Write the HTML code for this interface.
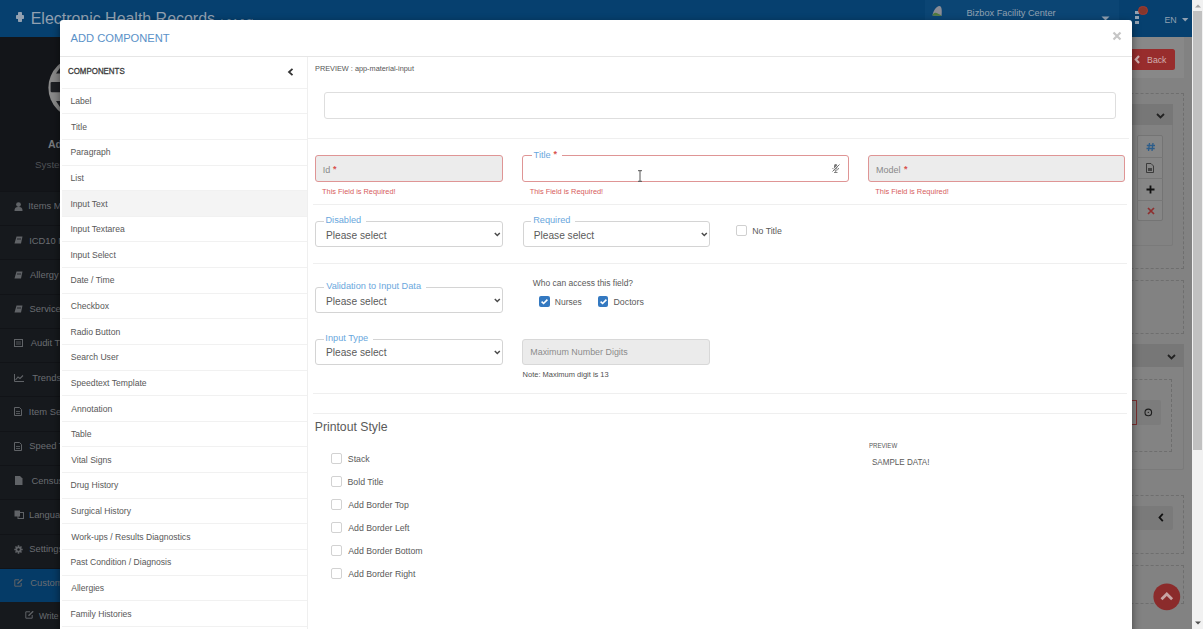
<!DOCTYPE html><html><head><meta charset="utf-8"><style>
html,body{margin:0;padding:0;width:1203px;height:629px;overflow:hidden;background:#838383}
.t{position:absolute;white-space:nowrap;font-family:"Liberation Sans",sans-serif}
.r{position:absolute}
</style></head><body>
<div class="r" style="left:0px;top:0px;width:1192px;height:37px;background:#06406f"></div>
<div class="r" style="left:18.2px;top:12px;width:3.400000000000002px;height:10.399999999999999px;background:#92a1b1;border-radius:0.8px"></div>
<div class="r" style="left:15.5px;top:15.4px;width:8.8px;height:3.4999999999999982px;background:#92a1b1;border-radius:0.8px"></div>
<div class="t" style="left:30.72px;top:10.50px;font-size:15.95px;line-height:15.95px;color:#92a1b1;font-weight:400;">Electronic Health Records</div>
<div class="t" style="left:220.02px;top:18.23px;font-size:8.00px;line-height:8.00px;color:#92a1b1;font-weight:400;">(v0.1.0.8)</div>
<div class="r" style="left:925px;top:0px;width:194px;height:37px;background:#0b4574"></div>
<svg class="r" style="left:931px;top:4px;" width="12" height="13" viewBox="0 0 12 13"><path d="M1.5 11.5 C2 7 5 2.5 8.5 2 C11 2.5 11 7 10.5 12 Z" fill="#8a8c95"/><path d="M1.5 11.5 C2 9.5 3.5 8.5 5.5 9 C7 10 9 10 10.5 12 Z" fill="#4e7a3c"/></svg>
<div class="t" style="left:966.46px;top:9.19px;font-size:9.22px;line-height:9.22px;color:#92a1b1;font-weight:400;">Bizbox Facility Center</div>
<svg class="r" style="left:1101px;top:16px;" width="9" height="5" viewBox="0 0 9 5"><path d="M0.5 0.5 H8.5 L4.5 4.5 Z" fill="#92a1b1"/></svg>
<div class="r" style="left:1135px;top:11.3px;width:3.599999999999909px;height:3.0px;background:#92a1b1"></div>
<div class="r" style="left:1135px;top:16.3px;width:3.599999999999909px;height:3.0px;background:#92a1b1"></div>
<div class="r" style="left:1135px;top:21.3px;width:3.599999999999909px;height:3.0px;background:#92a1b1"></div>
<div class="r" style="left:1138.3px;top:5.6px;width:9.4px;height:9.4px;border-radius:50%;background:#86362c;box-sizing:border-box;border:1px solid #a03a30"></div>
<div class="t" style="left:1164.39px;top:15.50px;font-size:8.86px;line-height:8.86px;color:#92a1b1;font-weight:400;">EN</div>
<svg class="r" style="left:1182.3px;top:18.3px;" width="7" height="4" viewBox="0 0 7 4"><path d="M0 0 H6.4 L3.2 3.5 Z" fill="#92a1b1"/></svg>
<div class="r" style="left:0px;top:37px;width:60px;height:592px;background:#131519"></div>
<div class="r" style="left:0px;top:190.6px;width:60px;height:438.4px;background:#16191d"></div>
<svg class="r" style="left:48px;top:56px;" width="12" height="64" viewBox="0 0 12 64"><circle cx="31.1" cy="31.8" r="30.7" fill="#8a8a8a"/><rect x="2.6" y="25.9" width="10" height="10.4" rx="1.2" fill="#1d1f23"/><path d="M8 17.5 L12 12 L12 17.5 Z" fill="#1d1f23"/><path d="M8 45 L12 51 L12 45 Z" fill="#1d1f23"/></svg>
<div class="t" style="left:47.94px;top:139.11px;font-size:10.50px;line-height:10.50px;color:#777a7e;font-weight:700;">Admin</div>
<div class="t" style="left:35.06px;top:159.70px;font-size:9.80px;line-height:9.80px;color:#4f5256;font-weight:400;">System Admin</div>
<div class="r" style="left:0px;top:190.6px;width:60px;height:1.0px;background:#111317"></div>
<div class="t" style="left:28.25px;top:201.04px;font-size:9.40px;line-height:9.40px;color:#6a6d72;font-weight:400;">Items Maintenance</div>
<svg class="r" style="left:13.5px;top:201.5px;" width="9" height="9" viewBox="0 0 9 9"><circle cx="4.5" cy="2.6" r="2.4" fill="#606367"/><path d="M0.5 9 C0.5 5.5 2 5 4.5 5 C7 5 8.5 5.5 8.5 9 Z" fill="#606367"/></svg>
<div class="r" style="left:0px;top:224.89999999999998px;width:60px;height:1.0px;background:#111317"></div>
<div class="t" style="left:29.15px;top:236.04px;font-size:9.40px;line-height:9.40px;color:#6a6d72;font-weight:400;">ICD10 Maintenance</div>
<svg class="r" style="left:13.5px;top:236.3px;" width="9" height="8" viewBox="0 0 9 8"><path d="M2.5 0.5 H8.5 L7 7.5 H0.5 Z" fill="#606367"/><path d="M3 3 H7" stroke="#131519" stroke-width="0.8"/></svg>
<div class="r" style="left:0px;top:259.2px;width:60px;height:1.0px;background:#111317"></div>
<div class="t" style="left:30.00px;top:270.04px;font-size:9.40px;line-height:9.40px;color:#6a6d72;font-weight:400;">Allergy Maintenance</div>
<svg class="r" style="left:13.5px;top:270.6px;" width="9" height="8" viewBox="0 0 9 8"><path d="M2.5 0.5 H8.5 L7 7.5 H0.5 Z" fill="#606367"/><path d="M3 3 H7" stroke="#131519" stroke-width="0.8"/></svg>
<div class="r" style="left:0px;top:293.5px;width:60px;height:1.0px;background:#111317"></div>
<div class="t" style="left:29.58px;top:304.04px;font-size:9.40px;line-height:9.40px;color:#6a6d72;font-weight:400;">Services Maintenance</div>
<svg class="r" style="left:13.5px;top:304.9px;" width="9" height="8" viewBox="0 0 9 8"><path d="M2.5 0.5 H8.5 L7 7.5 H0.5 Z" fill="#606367"/><path d="M3 3 H7" stroke="#131519" stroke-width="0.8"/></svg>
<div class="r" style="left:0px;top:327.79999999999995px;width:60px;height:1.0px;background:#111317"></div>
<div class="t" style="left:30.70px;top:338.04px;font-size:9.40px;line-height:9.40px;color:#6a6d72;font-weight:400;">Audit Trail</div>
<svg class="r" style="left:13.5px;top:339.2px;" width="9" height="8" viewBox="0 0 9 8"><rect x="0.5" y="0.5" width="8" height="7" fill="none" stroke="#606367" stroke-width="1"/><path d="M2 3 H7 M2 5 H7" stroke="#606367" stroke-width="0.8"/></svg>
<div class="r" style="left:0px;top:362.1px;width:60px;height:1.0px;background:#111317"></div>
<div class="t" style="left:32.31px;top:373.04px;font-size:9.40px;line-height:9.40px;color:#6a6d72;font-weight:400;">Trends</div>
<svg class="r" style="left:13.5px;top:373.5px;" width="10" height="8" viewBox="0 0 10 8"><path d="M0.5 0 V7.5 H10" fill="none" stroke="#606367" stroke-width="1"/><path d="M1.5 6 L4 3 L6 4.5 L9 1.5" fill="none" stroke="#606367" stroke-width="1.1"/></svg>
<div class="r" style="left:0px;top:396.4px;width:60px;height:1.0px;background:#111317"></div>
<div class="t" style="left:28.85px;top:407.04px;font-size:9.40px;line-height:9.40px;color:#6a6d72;font-weight:400;">Item Settings</div>
<svg class="r" style="left:13.5px;top:407.29999999999995px;" width="8" height="9" viewBox="0 0 8 9"><path d="M0.5 0.5 H5.5 L7.5 2.5 V8.5 H0.5 Z" fill="none" stroke="#606367" stroke-width="1"/><path d="M2 4.5 H6 M2 6.5 H6" stroke="#606367" stroke-width="0.8"/></svg>
<div class="r" style="left:0px;top:430.69999999999993px;width:60px;height:1.0px;background:#111317"></div>
<div class="t" style="left:29.28px;top:441.04px;font-size:9.40px;line-height:9.40px;color:#6a6d72;font-weight:400;">Speed Text</div>
<svg class="r" style="left:13.5px;top:441.59999999999997px;" width="8" height="9" viewBox="0 0 8 9"><path d="M0.5 0.5 H5.5 L7.5 2.5 V8.5 H0.5 Z" fill="none" stroke="#606367" stroke-width="1"/><path d="M2 4.5 H6 M2 6.5 H6" stroke="#606367" stroke-width="0.8"/></svg>
<div class="r" style="left:0px;top:465.0px;width:60px;height:1.0px;background:#111317"></div>
<div class="t" style="left:31.53px;top:476.04px;font-size:9.40px;line-height:9.40px;color:#6a6d72;font-weight:400;">Census</div>
<svg class="r" style="left:14.5px;top:475.9px;" width="8" height="9" viewBox="0 0 8 9"><path d="M0 0 H5 L7.5 2.5 V9 H0 Z" fill="#606367"/></svg>
<div class="r" style="left:0px;top:499.29999999999995px;width:60px;height:1.0px;background:#111317"></div>
<div class="t" style="left:28.95px;top:510.04px;font-size:9.40px;line-height:9.40px;color:#6a6d72;font-weight:400;">Language</div>
<svg class="r" style="left:13.5px;top:510.20000000000005px;" width="10" height="9" viewBox="0 0 10 9"><rect x="0.5" y="0.5" width="5.5" height="6" fill="#606367"/><rect x="4" y="2.5" width="5.5" height="6" fill="none" stroke="#606367" stroke-width="1"/></svg>
<div class="r" style="left:0px;top:533.6px;width:60px;height:1.0px;background:#111317"></div>
<div class="t" style="left:29.28px;top:544.04px;font-size:9.40px;line-height:9.40px;color:#6a6d72;font-weight:400;">Settings</div>
<svg class="r" style="left:14.0px;top:544.5px;" width="9" height="9" viewBox="0 0 9 9"><path d="M4.5 0.3 V8.7 M0.3 4.5 H8.7 M1.5 1.5 L7.5 7.5 M7.5 1.5 L1.5 7.5" stroke="#606367" stroke-width="1.6"/><circle cx="4.5" cy="4.5" r="3" fill="#606367"/><circle cx="4.5" cy="4.5" r="1.2" fill="#16191d"/></svg>
<div class="r" style="left:0px;top:567.9px;width:60px;height:1.0px;background:#111317"></div>
<div class="r" style="left:0px;top:568.9px;width:60px;height:33.299999999999955px;background:#053b67"></div>
<div class="t" style="left:30.23px;top:578.04px;font-size:9.40px;line-height:9.40px;color:#6a6d72;font-weight:400;">Customize</div>
<svg class="r" style="left:13.5px;top:579.3px;" width="9" height="8" viewBox="0 0 9 8"><path d="M5 0.8 H0.8 V7.2 H7.2 V4" fill="none" stroke="#606367" stroke-width="1"/><path d="M3.5 4.8 L8.2 0.3" stroke="#606367" stroke-width="1.4"/></svg>
<svg class="r" style="left:25px;top:611px;" width="9" height="8" viewBox="0 0 9 8"><path d="M5 0.8 H0.8 V7.2 H7.2 V4" fill="none" stroke="#606367" stroke-width="1"/><path d="M3.5 4.8 L8.2 0.3" stroke="#606367" stroke-width="1.4"/></svg>
<div class="t" style="left:39.00px;top:611.89px;font-size:8.40px;line-height:8.40px;color:#6a6d72;font-weight:400;">Write</div>
<div class="r" style="left:60px;top:37px;width:1132px;height:592px;background:#828282"></div>
<div class="r" style="left:60px;top:37px;width:1123.5px;height:41px;background:#888888"></div>
<div class="r" style="left:1110px;top:49px;width:65px;height:21.4px;border-radius:2.5px;background:#982d2d"></div>
<svg class="r" style="left:1133.5px;top:55px;" width="7" height="9" viewBox="0 0 7 9"><path d="M5 1 L1.8 4.5 L5 8" fill="none" stroke="#d2b0b0" stroke-width="2.2"/></svg>
<div class="t" style="left:1147.10px;top:55.64px;font-size:8.70px;line-height:8.70px;color:#d2b0b0;font-weight:400;">Back</div>
<div class="r" style="left:1100px;top:93.4px;width:84px;height:176.1px;border:1px dashed #6e6e6e;box-sizing:border-box"></div>
<div class="r" style="left:1100px;top:104px;width:73px;height:141.5px;background:#828282;border:1px solid #7a7a7a;border-radius:2px;box-sizing:border-box"></div>
<div class="r" style="left:1100px;top:104px;width:73px;height:20.5px;background:#777777"></div>
<svg class="r" style="left:1156px;top:113px;" width="9" height="6" viewBox="0 0 9 6"><path d="M1 1 L4.5 4.5 L8 1" fill="none" stroke="#222" stroke-width="1.8"/></svg>
<div class="r" style="left:1137.2px;top:135.3px;width:25.399999999999864px;height:85.89999999999998px;background:#868686;border:1px solid #747474;border-radius:2px;box-sizing:border-box"></div>
<div class="r" style="left:1137.2px;top:156.8px;width:25.399999999999864px;height:0.5px;background:#777"></div>
<div class="r" style="left:1137.2px;top:178.3px;width:25.399999999999864px;height:0.5px;background:#777"></div>
<div class="r" style="left:1137.2px;top:199.8px;width:25.399999999999864px;height:0.5px;background:#777"></div>
<svg class="r" style="left:1146px;top:141.5px;" width="10" height="10" viewBox="0 0 10 10"><path d="M3.5 1 L2.5 9 M7 1 L6 9 M0.8 3.5 H9 M0.5 6.5 H8.7" stroke="#2d5d8a" stroke-width="1.3"/></svg>
<svg class="r" style="left:1146px;top:163px;" width="8" height="10" viewBox="0 0 8 10"><path d="M0.5 0.5 H5 L7.5 3 V9.5 H0.5 Z" fill="none" stroke="#333" stroke-width="0.9"/><rect x="2" y="5" width="4" height="3" fill="#444"/></svg>
<svg class="r" style="left:1146px;top:185px;" width="9" height="9" viewBox="0 0 9 9"><path d="M4.5 0.5 V8.5 M0.5 4.5 H8.5" stroke="#111" stroke-width="1.8"/></svg>
<svg class="r" style="left:1146.5px;top:207px;" width="8" height="8" viewBox="0 0 8 8"><path d="M1 1 L7 7 M7 1 L1 7" stroke="#8e2e2e" stroke-width="1.7"/></svg>
<div class="r" style="left:1100px;top:280px;width:84px;height:54px;border:1px dashed #6e6e6e;box-sizing:border-box"></div>
<div class="r" style="left:1100px;top:344px;width:83.5px;height:126px;background:#838383;border:1px solid #7a7a7a;border-radius:2px;box-sizing:border-box"></div>
<div class="r" style="left:1100px;top:344px;width:83.5px;height:23px;background:#777777"></div>
<svg class="r" style="left:1167px;top:353.5px;" width="9" height="6" viewBox="0 0 9 6"><path d="M1 1 L4.5 4.5 L8 1" fill="none" stroke="#222" stroke-width="1.8"/></svg>
<div class="r" style="left:1100px;top:378.6px;width:72px;height:73.39999999999998px;border:1px dashed #6e6e6e;box-sizing:border-box"></div>
<div class="r" style="left:1100px;top:400px;width:36.59999999999991px;height:25.30000000000001px;border:1px solid #7c2f2f;box-sizing:border-box"></div>
<div class="r" style="left:1137px;top:400px;width:23.59999999999991px;height:25.30000000000001px;background:#7c7c7c;border-radius:2px"></div>
<svg class="r" style="left:1144px;top:408px;" width="9" height="9" viewBox="0 0 9 9"><circle cx="4.3" cy="4.4" r="3.3" fill="none" stroke="#1e1e1e" stroke-width="1.1"/><circle cx="4.3" cy="4.4" r="0.6" fill="#1e1e1e"/></svg>
<div class="r" style="left:1100px;top:495px;width:84px;height:58.5px;border:1px dashed #6e6e6e;box-sizing:border-box"></div>
<div class="r" style="left:1100px;top:506px;width:72.5px;height:24px;background:#7a7a7a;border-radius:2px"></div>
<svg class="r" style="left:1158px;top:513px;" width="6" height="9" viewBox="0 0 6 9"><path d="M4.8 0.8 L1.5 4.5 L4.8 8.2" fill="none" stroke="#111" stroke-width="1.8"/></svg>
<div class="r" style="left:1100px;top:565.4px;width:84px;height:38.60000000000002px;border:1px dashed #6e6e6e;box-sizing:border-box"></div>
<svg class="r" style="left:1153px;top:582.5px;" width="28" height="28" viewBox="0 0 28 28"><circle cx="13.8" cy="13.8" r="13.4" fill="#8b2b2b"/><path d="M8.5 16.3 L13.8 11 L19.1 16.3" fill="none" stroke="#c7a3a3" stroke-width="2.8"/></svg>
<div class="r" style="left:1192px;top:0px;width:11px;height:629px;background:#f1f1f1"></div>
<div class="r" style="left:1193px;top:11px;width:9px;height:438.5px;background:#c1c1c1"></div>
<svg class="r" style="left:1194.5px;top:4px;" width="6" height="4" viewBox="0 0 6 4"><path d="M0 3.5 H6 L3 0.5 Z" fill="#a3a3a3"/></svg>
<svg class="r" style="left:1194.5px;top:621px;" width="6" height="4" viewBox="0 0 6 4"><path d="M0 0.5 H6 L3 3.5 Z" fill="#505050"/></svg>
<div class="r" style="left:60px;top:20px;width:1072px;height:680px;background:#fff;border-radius:3px;box-shadow:0 3px 9px rgba(0,0,0,.5)"></div>
<div class="t" style="left:70.50px;top:32.55px;font-size:11.16px;line-height:11.16px;color:#5a91c8;font-weight:400;">ADD COMPONENT</div>
<div class="r" style="left:60px;top:56px;width:1072px;height:1px;background:#e6e6e6"></div>
<svg class="r" style="left:1112px;top:30.5px;" width="10" height="10" viewBox="0 0 10 10"><path d="M1.5 1.5 L8.5 8.5 M8.5 1.5 L1.5 8.5" stroke="#c6c6c6" stroke-width="2.2"/></svg>
<div class="r" style="left:307px;top:57px;width:1px;height:643px;background:#efefef"></div>
<div class="t" style="left:68.07px;top:66.72px;font-size:8.60px;line-height:8.60px;color:#3a3a3a;font-weight:400;-webkit-text-stroke:0.3px #3a3a3a;transform:scaleX(0.9204);transform-origin:0 0;">COMPONENTS</div>
<svg class="r" style="left:287px;top:67.8px;" width="7" height="8" viewBox="0 0 7 8"><path d="M5.5 0.8 L2 4 L5.5 7.2" fill="none" stroke="#333" stroke-width="1.8"/></svg>
<div class="r" style="left:62px;top:87.7px;width:245px;height:1.0px;background:#f1f1f1"></div>
<div class="r" style="left:62px;top:113.325px;width:245px;height:1.0px;background:#f1f1f1"></div>
<div class="r" style="left:62px;top:138.95px;width:245px;height:1.0px;background:#f1f1f1"></div>
<div class="r" style="left:62px;top:164.575px;width:245px;height:1.0px;background:#f1f1f1"></div>
<div class="r" style="left:62px;top:190.2px;width:245px;height:1.0px;background:#f1f1f1"></div>
<div class="r" style="left:62px;top:215.825px;width:245px;height:1.0px;background:#f1f1f1"></div>
<div class="r" style="left:62px;top:241.45px;width:245px;height:1.0px;background:#f1f1f1"></div>
<div class="r" style="left:62px;top:267.075px;width:245px;height:1.0px;background:#f1f1f1"></div>
<div class="r" style="left:62px;top:292.7px;width:245px;height:1.0px;background:#f1f1f1"></div>
<div class="r" style="left:62px;top:318.325px;width:245px;height:1.0px;background:#f1f1f1"></div>
<div class="r" style="left:62px;top:343.95px;width:245px;height:1.0px;background:#f1f1f1"></div>
<div class="r" style="left:62px;top:369.575px;width:245px;height:1.0px;background:#f1f1f1"></div>
<div class="r" style="left:62px;top:395.2px;width:245px;height:1.0px;background:#f1f1f1"></div>
<div class="r" style="left:62px;top:420.825px;width:245px;height:1.0px;background:#f1f1f1"></div>
<div class="r" style="left:62px;top:446.45px;width:245px;height:1.0px;background:#f1f1f1"></div>
<div class="r" style="left:62px;top:472.075px;width:245px;height:1.0px;background:#f1f1f1"></div>
<div class="r" style="left:62px;top:497.7px;width:245px;height:1.0px;background:#f1f1f1"></div>
<div class="r" style="left:62px;top:523.325px;width:245px;height:1.0px;background:#f1f1f1"></div>
<div class="r" style="left:62px;top:548.95px;width:245px;height:1.0px;background:#f1f1f1"></div>
<div class="r" style="left:62px;top:574.575px;width:245px;height:1.0px;background:#f1f1f1"></div>
<div class="r" style="left:62px;top:600.2px;width:245px;height:1.0px;background:#f1f1f1"></div>
<div class="r" style="left:62px;top:625.825px;width:245px;height:1.0px;background:#f1f1f1"></div>
<div class="t" style="left:70.51px;top:96.72px;font-size:8.60px;line-height:8.60px;color:#585858;font-weight:400;">Label</div>
<div class="t" style="left:71.03px;top:122.72px;font-size:8.60px;line-height:8.60px;color:#585858;font-weight:400;">Title</div>
<div class="t" style="left:70.51px;top:147.72px;font-size:8.60px;line-height:8.60px;color:#585858;font-weight:400;">Paragraph</div>
<div class="t" style="left:70.51px;top:173.72px;font-size:8.60px;line-height:8.60px;color:#585858;font-weight:400;">List</div>
<div class="r" style="left:62px;top:191.2px;width:245px;height:24.625px;background:#f4f4f4"></div>
<div class="t" style="left:70.43px;top:199.72px;font-size:8.60px;line-height:8.60px;color:#585858;font-weight:400;">Input Text</div>
<div class="t" style="left:70.43px;top:224.72px;font-size:8.60px;line-height:8.60px;color:#585858;font-weight:400;">Input Textarea</div>
<div class="t" style="left:70.43px;top:250.72px;font-size:8.60px;line-height:8.60px;color:#585858;font-weight:400;">Input Select</div>
<div class="t" style="left:70.51px;top:275.72px;font-size:8.60px;line-height:8.60px;color:#585858;font-weight:400;">Date / Time</div>
<div class="t" style="left:70.77px;top:301.72px;font-size:8.60px;line-height:8.60px;color:#585858;font-weight:400;">Checkbox</div>
<div class="t" style="left:70.51px;top:327.72px;font-size:8.60px;line-height:8.60px;color:#585858;font-weight:400;">Radio Button</div>
<div class="t" style="left:70.81px;top:352.72px;font-size:8.60px;line-height:8.60px;color:#585858;font-weight:400;">Search User</div>
<div class="t" style="left:70.81px;top:378.72px;font-size:8.60px;line-height:8.60px;color:#585858;font-weight:400;">Speedtext Template</div>
<div class="t" style="left:71.20px;top:404.72px;font-size:8.60px;line-height:8.60px;color:#585858;font-weight:400;">Annotation</div>
<div class="t" style="left:71.03px;top:429.72px;font-size:8.60px;line-height:8.60px;color:#585858;font-weight:400;">Table</div>
<div class="t" style="left:71.20px;top:455.72px;font-size:8.60px;line-height:8.60px;color:#585858;font-weight:400;">Vital Signs</div>
<div class="t" style="left:70.51px;top:480.72px;font-size:8.60px;line-height:8.60px;color:#585858;font-weight:400;">Drug History</div>
<div class="t" style="left:70.81px;top:506.72px;font-size:8.60px;line-height:8.60px;color:#585858;font-weight:400;">Surgical History</div>
<div class="t" style="left:71.20px;top:532.72px;font-size:8.60px;line-height:8.60px;color:#585858;font-weight:400;">Work-ups / Results Diagnostics</div>
<div class="t" style="left:70.51px;top:557.72px;font-size:8.60px;line-height:8.60px;color:#585858;font-weight:400;">Past Condition / Diagnosis</div>
<div class="t" style="left:71.20px;top:583.72px;font-size:8.60px;line-height:8.60px;color:#585858;font-weight:400;">Allergies</div>
<div class="t" style="left:70.51px;top:609.72px;font-size:8.60px;line-height:8.60px;color:#585858;font-weight:400;">Family Histories</div>
<div class="t" style="left:315.42px;top:64.91px;font-size:7.20px;line-height:7.20px;color:#555;font-weight:400;transform:scaleX(1.0190);transform-origin:0 0;">PREVIEW : app-material-input</div>
<div class="r" style="left:324.4px;top:92.3px;width:791.1999999999999px;height:26.900000000000006px;border:1px solid #dedede;border-radius:3px;box-sizing:border-box"></div>
<div class="r" style="left:308px;top:138px;width:821px;height:1px;background:#efefef"></div>
<div class="r" style="left:315px;top:155.2px;width:188px;height:26.400000000000006px;background:#ececec;border:1.5px solid #df9595;border-radius:3px;box-sizing:border-box"></div>
<div class="t" style="left:322.69px;top:166.38px;font-size:9.00px;line-height:9.00px;color:#8a8a8a;font-weight:400;">Id</div>
<div class="t" style="left:333.00px;top:165.38px;font-size:9.00px;line-height:9.00px;color:#d9534f;font-weight:700;">*</div>
<div class="t" style="left:322.05px;top:187.74px;font-size:7.40px;line-height:7.40px;color:#d65c5c;font-weight:400;">This Field is Required!</div>
<div class="r" style="left:868.2px;top:155.2px;width:257.0999999999999px;height:26.400000000000006px;background:#ececec;border:1.5px solid #df9595;border-radius:3px;box-sizing:border-box"></div>
<div class="t" style="left:875.98px;top:166.38px;font-size:9.00px;line-height:9.00px;color:#8a8a8a;font-weight:400;">Model</div>
<div class="t" style="left:904.00px;top:165.38px;font-size:9.00px;line-height:9.00px;color:#d9534f;font-weight:700;">*</div>
<div class="t" style="left:875.35px;top:187.74px;font-size:7.40px;line-height:7.40px;color:#d65c5c;font-weight:400;">This Field is Required!</div>
<div class="r" style="left:522.3px;top:155.2px;width:326.70000000000005px;height:26.400000000000006px;border:1.5px solid #df9595;border-radius:3px;box-sizing:border-box"></div>
<div class="r" style="left:532px;top:153px;width:29.600000000000023px;height:5px;background:#fff"></div>
<div class="t" style="left:533.62px;top:151.21px;font-size:9.20px;line-height:9.20px;color:#6aa7dd;font-weight:400;">Title</div>
<div class="t" style="left:553.50px;top:150.38px;font-size:9.00px;line-height:9.00px;color:#d9534f;font-weight:700;">*</div>
<div class="t" style="left:529.65px;top:187.74px;font-size:7.40px;line-height:7.40px;color:#d65c5c;font-weight:400;">This Field is Required!</div>
<svg class="r" style="left:831px;top:163px;" width="10" height="10" viewBox="0 0 10 10"><rect x="3" y="1" width="3.4" height="5.5" rx="1.7" fill="#777"/><path d="M1.8 5 C1.8 8 7.6 8 7.6 5 M4.7 7.5 V9.5 M3 9.5 H6.5" fill="none" stroke="#777" stroke-width="0.9"/><path d="M1 8.8 L8.5 1.2" stroke="#fff" stroke-width="1.6"/><path d="M1.5 8.5 L8.5 1.5" stroke="#666" stroke-width="0.9"/></svg>
<div class="r" style="left:312.6px;top:204px;width:814.4px;height:1px;background:#efefef"></div>
<div class="r" style="left:315px;top:221px;width:187.7px;height:26px;border:1px solid #d4d4d4;border-radius:3px;box-sizing:border-box"></div>
<div class="r" style="left:323.5px;top:218px;width:42.0px;height:5px;background:#fff"></div>
<div class="t" style="left:325.46px;top:216.21px;font-size:9.20px;line-height:9.20px;color:#6aa7dd;font-weight:400;">Disabled</div>
<div class="t" style="left:325.99px;top:231.38px;font-size:10.18px;line-height:10.18px;color:#5a5a5a;font-weight:400;">Please select</div>
<svg class="r" style="left:493.5px;top:231.5px;" width="7" height="5" viewBox="0 0 7 5"><path d="M0.8 1 L3.3 3.5 L5.8 1" fill="none" stroke="#4a4a4a" stroke-width="1.5"/></svg>
<div class="r" style="left:522.7px;top:221px;width:187.0999999999999px;height:26px;border:1px solid #d4d4d4;border-radius:3px;box-sizing:border-box"></div>
<div class="r" style="left:531.2px;top:218px;width:43.51800000000003px;height:5px;background:#fff"></div>
<div class="t" style="left:533.16px;top:216.21px;font-size:9.20px;line-height:9.20px;color:#6aa7dd;font-weight:400;">Required</div>
<div class="t" style="left:533.69px;top:231.38px;font-size:10.18px;line-height:10.18px;color:#5a5a5a;font-weight:400;">Please select</div>
<svg class="r" style="left:700.5999999999999px;top:231.5px;" width="7" height="5" viewBox="0 0 7 5"><path d="M0.8 1 L3.3 3.5 L5.8 1" fill="none" stroke="#4a4a4a" stroke-width="1.5"/></svg>
<div class="r" style="left:736px;top:225.2px;width:10.799999999999955px;height:10.400000000000006px;border:1px solid #d0d0d0;border-radius:2px;box-sizing:border-box"></div>
<div class="t" style="left:752.20px;top:226.60px;font-size:8.75px;line-height:8.75px;color:#5a5a5a;font-weight:400;">No Title</div>
<div class="r" style="left:312.6px;top:263px;width:814.4px;height:1px;background:#efefef"></div>
<div class="r" style="left:315px;top:287px;width:187.7px;height:26px;border:1px solid #d4d4d4;border-radius:3px;box-sizing:border-box"></div>
<div class="r" style="left:323.5px;top:284px;width:102.49000000000001px;height:5px;background:#fff"></div>
<div class="t" style="left:326.20px;top:282.21px;font-size:9.20px;line-height:9.20px;color:#6aa7dd;font-weight:400;">Validation to Input Data</div>
<div class="t" style="left:325.99px;top:297.38px;font-size:10.18px;line-height:10.18px;color:#5a5a5a;font-weight:400;">Please select</div>
<svg class="r" style="left:493.5px;top:297.5px;" width="7" height="5" viewBox="0 0 7 5"><path d="M0.8 1 L3.3 3.5 L5.8 1" fill="none" stroke="#4a4a4a" stroke-width="1.5"/></svg>
<div class="t" style="left:532.80px;top:278.82px;font-size:8.48px;line-height:8.48px;color:#5a5a5a;font-weight:400;">Who can access this field?</div>
<div class="r" style="left:539px;top:296px;width:10.8px;height:10.8px;background:#3479c1;border-radius:2px"></div>
<svg class="r" style="left:539px;top:296px;" width="11" height="11" viewBox="0 0 11 11"><path d="M2.6 5.6 L4.6 7.5 L8.4 3.6" fill="none" stroke="#fff" stroke-width="1.6"/></svg>
<div class="t" style="left:554.82px;top:297.80px;font-size:8.51px;line-height:8.51px;color:#5a5a5a;font-weight:400;">Nurses</div>
<div class="r" style="left:597.7px;top:296px;width:10.8px;height:10.8px;background:#3479c1;border-radius:2px"></div>
<svg class="r" style="left:597.7px;top:296px;" width="11" height="11" viewBox="0 0 11 11"><path d="M2.6 5.6 L4.6 7.5 L8.4 3.6" fill="none" stroke="#fff" stroke-width="1.6"/></svg>
<div class="t" style="left:613.50px;top:297.55px;font-size:8.80px;line-height:8.80px;color:#5a5a5a;font-weight:400;">Doctors</div>
<div class="r" style="left:315px;top:339px;width:187.7px;height:26px;border:1px solid #d4d4d4;border-radius:3px;box-sizing:border-box"></div>
<div class="r" style="left:323.5px;top:336px;width:49.084px;height:5px;background:#fff"></div>
<div class="t" style="left:325.37px;top:334.21px;font-size:9.20px;line-height:9.20px;color:#6aa7dd;font-weight:400;">Input Type</div>
<div class="t" style="left:325.99px;top:348.38px;font-size:10.18px;line-height:10.18px;color:#5a5a5a;font-weight:400;">Please select</div>
<svg class="r" style="left:493.5px;top:349.5px;" width="7" height="5" viewBox="0 0 7 5"><path d="M0.8 1 L3.3 3.5 L5.8 1" fill="none" stroke="#4a4a4a" stroke-width="1.5"/></svg>
<div class="r" style="left:522.3px;top:339px;width:187.5px;height:26px;background:#ebebeb;border:1px solid #d8d8d8;border-radius:3px;box-sizing:border-box"></div>
<div class="t" style="left:530.29px;top:348.46px;font-size:8.91px;line-height:8.91px;color:#8c8c8c;font-weight:400;">Maximum Number Digits</div>
<div class="t" style="left:522.60px;top:371.16px;font-size:7.49px;line-height:7.49px;color:#505050;font-weight:400;">Note: Maximum digit is 13</div>
<div class="r" style="left:312.6px;top:393px;width:814.4px;height:1px;background:#efefef"></div>
<div class="r" style="left:312.6px;top:413px;width:814.4px;height:1px;background:#efefef"></div>
<div class="t" style="left:314.72px;top:420.64px;font-size:12.24px;line-height:12.24px;color:#5a5a5a;font-weight:400;">Printout Style</div>
<div class="r" style="left:331.2px;top:453.3px;width:10.600000000000023px;height:10.600000000000023px;border:1px solid #d2d2d2;border-radius:2px;box-sizing:border-box"></div>
<div class="t" style="left:347.81px;top:454.59px;font-size:8.75px;line-height:8.75px;color:#5a5a5a;font-weight:400;">Stack</div>
<div class="r" style="left:331.2px;top:476.25px;width:10.600000000000023px;height:10.600000000000023px;border:1px solid #d2d2d2;border-radius:2px;box-sizing:border-box"></div>
<div class="t" style="left:347.50px;top:477.59px;font-size:8.75px;line-height:8.75px;color:#5a5a5a;font-weight:400;">Bold Title</div>
<div class="r" style="left:331.2px;top:499.2px;width:10.600000000000023px;height:10.600000000000023px;border:1px solid #d2d2d2;border-radius:2px;box-sizing:border-box"></div>
<div class="t" style="left:348.20px;top:500.59px;font-size:8.75px;line-height:8.75px;color:#5a5a5a;font-weight:400;">Add Border Top</div>
<div class="r" style="left:331.2px;top:522.15px;width:10.600000000000023px;height:10.600000000000023px;border:1px solid #d2d2d2;border-radius:2px;box-sizing:border-box"></div>
<div class="t" style="left:348.20px;top:523.59px;font-size:8.75px;line-height:8.75px;color:#5a5a5a;font-weight:400;">Add Border Left</div>
<div class="r" style="left:331.2px;top:545.1px;width:10.600000000000023px;height:10.600000000000023px;border:1px solid #d2d2d2;border-radius:2px;box-sizing:border-box"></div>
<div class="t" style="left:348.20px;top:546.59px;font-size:8.75px;line-height:8.75px;color:#5a5a5a;font-weight:400;">Add Border Bottom</div>
<div class="r" style="left:331.2px;top:568.05px;width:10.600000000000023px;height:10.600000000000023px;border:1px solid #d2d2d2;border-radius:2px;box-sizing:border-box"></div>
<div class="t" style="left:348.20px;top:569.59px;font-size:8.75px;line-height:8.75px;color:#5a5a5a;font-weight:400;">Add Border Right</div>
<div class="t" style="left:868.66px;top:443.24px;font-size:6.80px;line-height:6.80px;color:#555;font-weight:400;transform:scaleX(0.8982);transform-origin:0 0;">PREVIEW</div>
<div class="t" style="left:871.70px;top:457.55px;font-size:8.80px;line-height:8.80px;color:#5a5a5a;font-weight:400;transform:scaleX(0.9156);transform-origin:0 0;">SAMPLE DATA!</div>
<svg class="r" style="left:637px;top:170px;" width="6" height="12" viewBox="0 0 6 12"><path d="M1 0.7 H5 M3 0.7 V11.3 M1 11.3 H5" fill="none" stroke="#555" stroke-width="1"/></svg>
</body></html>
